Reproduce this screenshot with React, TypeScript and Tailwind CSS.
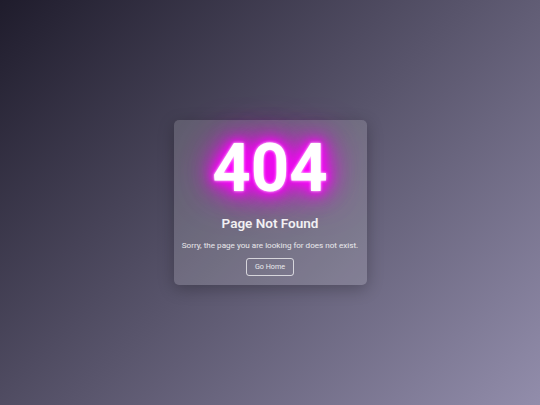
export default function App() {
  return (
    <div className="w-full h-[405px] flex items-center justify-center bg-[linear-gradient(135deg,#1f1c2c,#928dab)] font-['Roboto',sans-serif]">
      <div className="w-[193px] h-[165px] rounded-[5px] bg-white/15 shadow-[0_4px_16px_rgba(0,0,0,0.25)] flex flex-col items-center pt-[13px]">
        <h1 className="text-[67px] leading-[70px] font-bold text-white [text-shadow:0_0_3px_#fff,0_0_8px_#f0f,0_0_14px_#f0f,0_0_22px_#f0f,0_0_32px_#f0f,0_0_44px_#d0d]">
          404
        </h1>
        <h2 className="mt-[11px] text-[13.5px] leading-[18px] font-semibold text-white/90">Page Not Found</h2>
        <p className="mt-[7px] text-[8.1px] leading-[12px] text-white/85 whitespace-nowrap">
          Sorry, the page you are looking for does not exist.
        </p>
        <button className="mt-[7px] w-[48px] h-[18px] border border-white/70 rounded-[3px] text-[7.2px] text-white/85">
          Go Home
        </button>
      </div>
    </div>
  );
}
